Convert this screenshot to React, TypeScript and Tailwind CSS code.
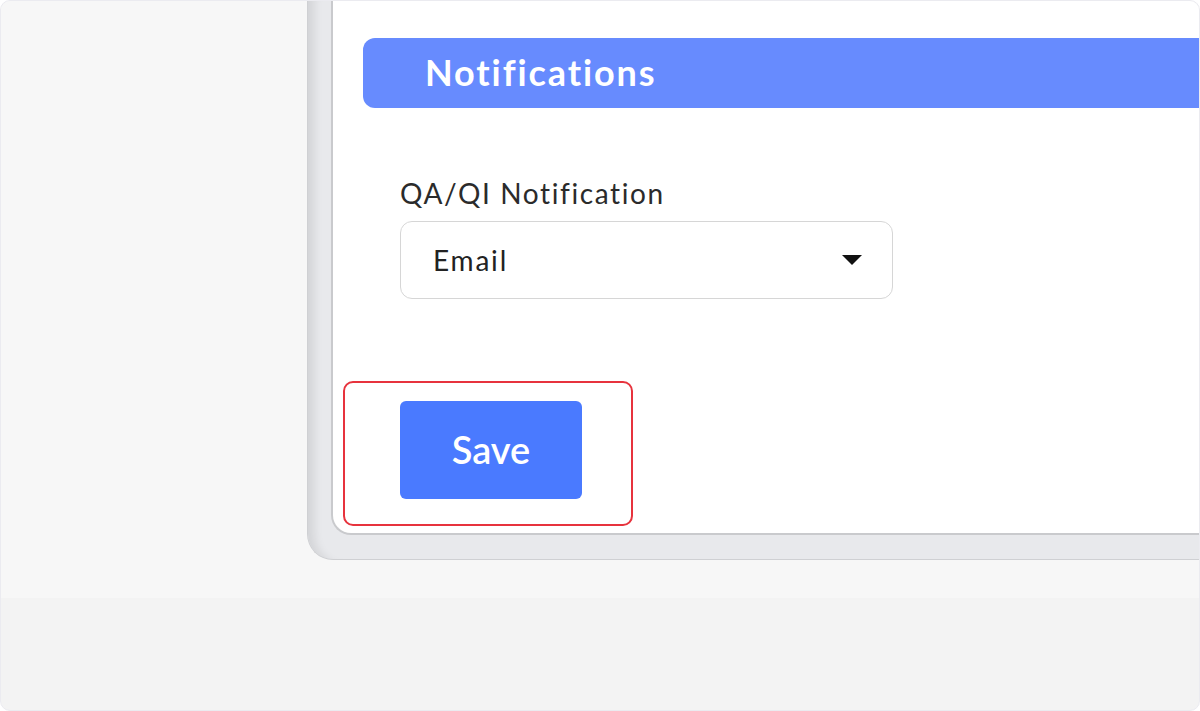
import React from "react";

const App = () => {
  return (
    <div className="w-[1200px] h-[711px] overflow-hidden rounded-[10px] border border-[#ebebf0] bg-[#f3f3f3] font-['Lato','Noto_Sans',sans-serif] flex flex-col">
      <div className="h-[597px] bg-[#f7f7f7] pl-[306px] shrink-0">
        <div className="w-[920px] h-[559px] bg-[#e8e9ec] border-l border-b border-[#cfd0d3] rounded-bl-[26px] pl-[23px] pb-[24px] shadow-[inset_14px_0_10px_-8px_rgba(0,0,0,0.09)]">
          <div className="h-full bg-white border-l-2 border-b-2 border-[#c9cacd] rounded-bl-[20px] pt-[37px]">
            <div className="ml-[30px] h-[70px] rounded-l-[12px] bg-[#678bfe] flex items-center pl-[62px] pb-[3px]">
              <span className="text-white text-[36px] font-bold leading-none tracking-[1.9px]">
                Notifications
              </span>
            </div>
            <div className="ml-[67px] mt-[68px] flex flex-col">
              <label className="text-[28px] leading-[34px] text-[#2b2b2b] tracking-[1.6px]">
                QA/QI Notification
              </label>
              <div className="mt-[11px] w-[493px] h-[78px] rounded-[12px] border-[1.5px] border-[#d6d6d6] flex items-center justify-between pl-[32px] pr-[30px]">
                <span className="text-[28px] text-[#222] tracking-[1.8px]">Email</span>
                <svg width="20" height="10" viewBox="0 0 20 10">
                  <path d="M0 0 H20 L10 10 Z" fill="#111" />
                </svg>
              </div>
              <div className="relative mt-[102px] w-[182px]">
                <button className="w-[182px] h-[98px] rounded-[6px] bg-[#4a7aff] text-white text-[38px] font-semibold pb-[2px]">
                  Save
                </button>
                <div className="absolute -left-[57px] -top-[20px] w-[290px] h-[145px] rounded-[10px] border-2 border-[#e7333d]" />
              </div>
            </div>
          </div>
        </div>
      </div>
    </div>
  );
};

export default App;
